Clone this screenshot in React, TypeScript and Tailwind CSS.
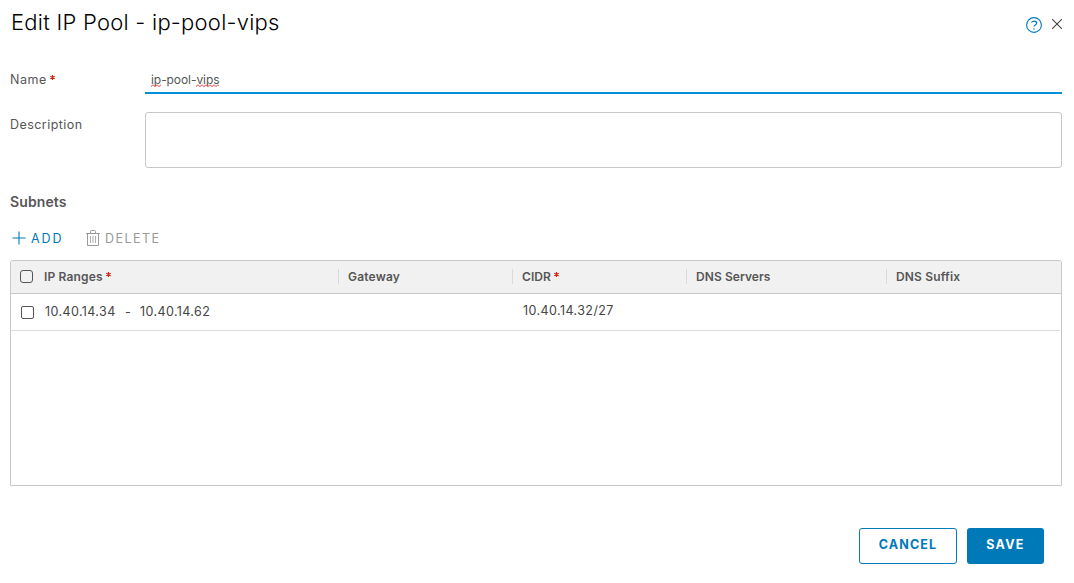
import React from "react";

const Required = () => (
  <svg className="mb-[5px] ml-[3px] h-[5px] w-[5px] shrink-0" viewBox="0 0 5 5" stroke="#cf2a14" strokeWidth="1.2">
    <path d="M2.5 0v5M0.3 1.2l4.4 2.6M4.7 1.2L0.3 3.8" />
  </svg>
);

const Misspelled = ({ text }: { text: string }) => (
  <span className="relative">
    {text}
    <svg className="absolute bottom-0 left-0 h-[3px] w-full" fill="none" stroke="#e8403c">
      <defs>
        <pattern id="squiggle" width="4" height="3" patternUnits="userSpaceOnUse">
          <path d="M-1 1.5L0 2.5L2 .8L4 2.5L5 1.5" strokeWidth="0.9" />
        </pattern>
      </defs>
      <rect width="100%" height="3" fill="url(#squiggle)" stroke="none" />
    </svg>
  </span>
);

const columns = [
  { label: "Gateway", required: false, width: "w-[174px]", tracking: "tracking-[0.2px]" },
  { label: "CIDR", required: true, width: "w-[174px]", tracking: "tracking-[0.05px]" },
  { label: "DNS Servers", required: false, width: "w-[200px]", tracking: "tracking-[0.07px]" },
  { label: "DNS Suffix", required: false, width: "w-[175px]", tracking: "tracking-[0.17px]" },
];

export default function App() {
  return (
    <div className="flex h-[583px] w-[1074px] flex-col bg-white pl-[10px] pr-3 font-['Inter',sans-serif] text-[13px] leading-5 text-[#565656]">
      <header className="flex h-[46px] shrink-0 items-start justify-between">
        <h1 className="pl-px pt-[6px] text-[22px] font-light leading-8 tracking-[0.25px] text-black">Edit IP Pool - ip-pool-vips</h1>
        <div className="flex items-start">
          <svg className="mt-[17px] h-4 w-4" viewBox="0 0 16 16" fill="none" stroke="#0079b8">
            <circle cx="8" cy="8" r="7.4" strokeWidth="1.1" />
            <path d="M5.4 5.5C6 4.7 7 4.2 8 4.2c1.6 0 2.7.9 2.7 2.1C10.7 8 8 7.8 8 9.6" strokeWidth="1.2" />
            <path d="M7.3 12h1.4" strokeWidth="1.2" />
          </svg>
          <svg className="ml-[10px] mt-[19px] h-[10px] w-[10px]" viewBox="0 0 10 10" stroke="#454545" strokeWidth="1.1">
            <path d="M0 0l10 10M10 0L0 10" />
          </svg>
        </div>
      </header>

      <div className="mt-5 flex h-7 shrink-0">
        <div className="flex w-[135px] items-center">
          <span className="text-[12.5px] tracking-[0.55px]">Name</span>
          <Required />
        </div>
        <div className="flex-1 border-b-2 border-[#0091da] pl-[6px] pt-1 text-xs leading-5 tracking-[-0.07px]">
          <Misspelled text="ip" />-pool-<Misspelled text="vips" />
        </div>
      </div>

      <div className="mt-[18px] flex h-14 shrink-0">
        <span className="w-[135px] pt-[3px] text-[12.5px] tracking-[0.45px]">Description</span>
        <div className="flex-1 rounded-[3px] border border-[#c8c8c8]" />
      </div>

      <h2 className="mt-6 h-5 shrink-0 text-sm font-semibold leading-5 tracking-[0.1px]">Subnets</h2>

      <div className="mt-4 flex h-5 shrink-0 items-center">
        <button className="flex items-center text-[#0079b8]">
          <svg className="ml-[2px] h-[14px] w-[14px]" viewBox="0 0 14 14" stroke="currentColor" strokeWidth="1.1">
            <path d="M7 0.5v13M0.5 7h13" />
          </svg>
          <span className="ml-[5px] w-[55px] pt-px text-left text-[12.5px] tracking-[1.9px]">ADD</span>
        </button>
        <button className="flex items-center text-[#9a9a9a]">
          <svg className="h-4 w-[14px]" viewBox="0 0 14 16" fill="none" stroke="currentColor">
            <path d="M0 3.5h14M4.5 3V1.4Q4.5.5 5.4.5h3.2q.9 0 .9.9V3M1.5 4v11.5h11V4" />
            <path d="M4.5 6v7M7 6v7M9.5 6v7" strokeWidth="0.8" />
          </svg>
          <span className="ml-[5px] pt-px text-[12.5px] tracking-[1.45px]">DELETE</span>
        </button>
      </div>

      <section className="mt-3 flex h-[226px] shrink-0 flex-col rounded-t-[3px] border border-[#c8c8c8]">
        <div className="flex h-[33px] shrink-0 items-center rounded-t-[2px] border-b border-[#c8c8c8] bg-[#f1f1f1] pb-px text-xs font-semibold">
          <div className="flex w-[327px] items-center">
            <span className="ml-[9px] mr-[11px] h-[13px] w-[13px] rounded-[3px] border-[1.5px] border-[#565656] bg-[#f1f1f1]" />
            <span className="tracking-[0.15px]">IP Ranges</span>
            <Required />
          </div>
          {columns.map((column) => (
            <div key={column.label} className={`flex items-center ${column.width}`}>
              <span className="mr-[9px] h-[15px] w-px bg-[#dadada]" />
              <span className={column.tracking}>{column.label}</span>
              {column.required && <Required />}
            </div>
          ))}
        </div>
        <div className="mr-px flex h-[37px] shrink-0 border-b border-[#dcdcdc] text-[12.5px] text-[#454545]">
          <div className="flex w-[501px] items-center">
            <span className="ml-[10px] mr-[11px] h-[13px] w-[13px] rounded-[2px] border border-[#565656]" />
            <span className="w-[80px] tracking-[0.4px]">10.40.14.34</span>
            <span className="w-[15px]">-</span>
            <span className="tracking-[0.4px]">10.40.14.62</span>
          </div>
          <span className="pl-[11px] pt-[7px] tracking-[0.42px]">10.40.14.32/27</span>
        </div>
      </section>

      <footer className="mr-[18px] mt-[42px] flex h-9 shrink-0 justify-end gap-[10px] text-[12.5px] font-bold">
        <button className="h-9 w-[98px] rounded-[3px] border border-[#0079b8] pb-[3px] tracking-[1.15px] text-[#0079b8]">CANCEL</button>
        <button className="h-9 w-[77px] rounded-[3px] bg-[#0079b8] pb-[3px] tracking-[1.3px] text-white">SAVE</button>
      </footer>
    </div>
  );
}
